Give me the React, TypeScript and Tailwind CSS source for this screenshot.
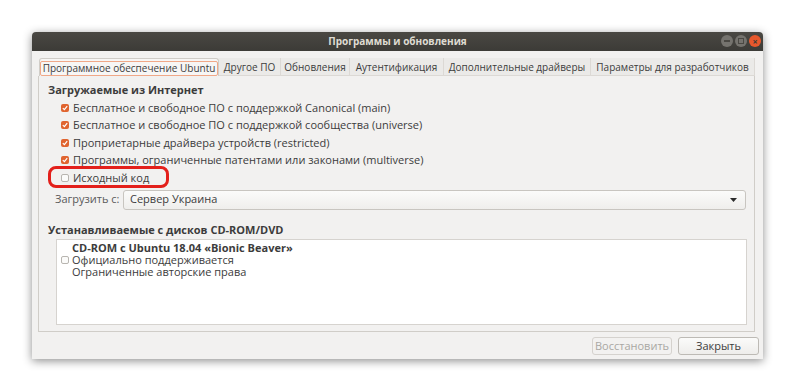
function Check({ on }: { on?: boolean }) {
  if (on) {
    return (
      <span className="flex h-[8px] w-[8px] shrink-0 items-center justify-center rounded-[2px] bg-[#e0642f]">
        <svg width="6" height="6" viewBox="0 0 6 6">
          <path d="M0.8 3.1 L2.4 4.6 L5.2 1.2" fill="none" stroke="#fff" strokeWidth="1.2" />
        </svg>
      </span>
    );
  }
  return <span className="block h-[8px] w-[8px] shrink-0 rounded-[2px] border border-[#b8b5b0] bg-[#fbfbfa]" />;
}

const tabs = [
  { label: "Другое ПО", w: "w-[62px]" },
  { label: "Обновления", w: "w-[69px]" },
  { label: "Аутентификация", w: "w-[94px]" },
  { label: "Дополнительные драйверы", w: "w-[147px]" },
  { label: "Параметры для разработчиков", w: "w-[164px]" },
];

const sources = [
  "Бесплатное и свободное ПО с поддержкой Canonical (main)",
  "Бесплатное и свободное ПО с поддержкой сообщества (universe)",
  "Проприетарные драйвера устройств (restricted)",
  "Программы, ограниченные патентами или законами (multiverse)",
];

export default function App() {
  return (
    <div className="h-[391px] w-[795px] bg-white pl-[32px] pt-[32px] font-['Open_Sans',sans-serif] text-[11px] text-[#3c3c3c]">
      <div className="flex h-[327px] w-[731px] flex-col overflow-hidden rounded-t-[4px] bg-[#f2f1f0] shadow-[0_2px_10px_rgba(0,0,0,0.45)]">
        {/* title bar */}
        <div className="relative flex h-[19px] items-center justify-center bg-gradient-to-b from-[#4a4843] to-[#3c3b37]">
          <span className="text-[10px] font-bold text-[#dfdbd2]">Программы и обновления</span>
          <div className="absolute right-[2px] top-[3px] flex gap-[2px]">
            <span className="flex h-[12px] w-[12px] items-center justify-center rounded-full bg-[#75736e]">
              <span className="h-[2px] w-[6px] bg-[#4a4843]" />
            </span>
            <span className="flex h-[12px] w-[12px] items-center justify-center rounded-full bg-[#75736e]">
              <span className="h-[6px] w-[6px] border border-[#4a4843]" />
            </span>
            <span className="flex h-[12px] w-[12px] items-center justify-center rounded-full bg-[#e8582c] text-[9px] font-bold leading-none text-[#3c3b37]">
              ×
            </span>
          </div>
        </div>

        <div className="flex flex-1 flex-col pl-[6px] pr-[4px] pt-[7px]">
          {/* tabs */}
          <div className="flex h-[18px] whitespace-nowrap pl-[1px] text-[10px]">
            <div className="flex w-[180px] items-center justify-center rounded-t-[3px] border border-b-0 border-[#d0cdc8] bg-[#f7f6f5] pt-[2px]">
              <span className="rounded-[2px] border border-[#f0a888] px-[2px] leading-[13px]">Программное обеспечение Ubuntu</span>
            </div>
            {tabs.map((t) => (
              <div
                key={t.label}
                className={`${t.w} flex shrink-0 items-center justify-center border-b border-r border-[#dcd9d5] bg-[#ebeae8] pt-[1px]`}
              >
                {t.label}
              </div>
            ))}
          </div>

          {/* panel */}
          <div className="mr-[4px] flex h-[256px] flex-col border border-t-0 border-[#d0cdc8] pl-[9px] pr-[8px] pt-[6px]">
            <div className="font-bold leading-[15px]">Загружаемые из Интернет</div>
            <div className="relative mt-[2px] flex flex-col pl-[13px]">
              {sources.map((s) => (
                <div key={s} className="flex h-[17.5px] items-center gap-[4px]">
                  <Check on />
                  <span>{s}</span>
                </div>
              ))}
              <div className="flex h-[17.5px] items-center gap-[4px]">
                <Check />
                <span>Исходный код</span>
              </div>
              <div className="absolute left-[0px] top-[67px] h-[22px] w-[121px] rounded-[8px] border-[3px] border-[#e3201b]" />
            </div>

            <div className="mt-[3px] grid grid-cols-[75px_1fr] items-center">
              <div className="pl-[7px] text-left text-[#5a5a5a]">Загрузить с:</div>
              <div className="flex h-[20px] items-center justify-between rounded-[3px] border border-[#c8c5c0] bg-gradient-to-b from-[#fbfbfa] to-[#efeeec] pl-[6px] pr-[8px]">
                <span>Сервер Украина</span>
                <svg width="7" height="4" viewBox="0 0 7 4">
                  <path d="M0 0 H7 L3.5 4 Z" fill="#2b2b2b" />
                </svg>
              </div>
            </div>

            <div className="mt-[12px] font-bold leading-[15px]">Устанавливаемые с дисков CD-ROM/DVD</div>
            <div className="ml-[8px] mr-[-1px] mt-[2px] h-[86px] border border-[#d6d3cf] bg-white pt-[2px]">
              <div className="grid grid-cols-[15px_auto] items-center leading-[12px]">
                <span />
                <span className="font-bold">CD-ROM с Ubuntu 18.04 «Bionic Beaver»</span>
                <span className="flex pl-[4px]">
                  <Check />
                </span>
                <span>Официально поддерживается</span>
                <span />
                <span>Ограниченные авторские права</span>
              </div>
            </div>
          </div>

          {/* buttons */}
          <div className="mt-[5px] flex justify-end gap-[6px]">
            <div className="flex h-[18px] w-[80px] items-center justify-center rounded-[3px] border border-[#d5d2ce] bg-[#f2f1f0] text-[#a9a7a3]">
              Восстановить
            </div>
            <div className="flex h-[18px] w-[81px] items-center justify-center rounded-[3px] border border-[#bdbab5] bg-gradient-to-b from-[#fbfbfa] to-[#eeedeb] text-[#3c3c3c]">
              Закрыть
            </div>
          </div>
        </div>
      </div>
    </div>
  );
}
